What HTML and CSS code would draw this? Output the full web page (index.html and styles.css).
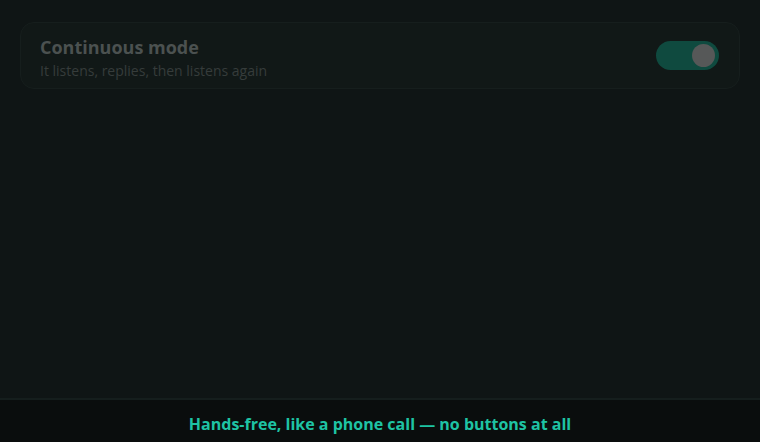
FILE: index.html
```html
<!DOCTYPE html>
<html lang="en">
<head>
<meta charset="utf-8">
<title>Continuous mode</title>
<link rel="stylesheet" href="styles.css">
</head>
<body>
<div class="app">
  <main class="content">
    <section class="card">
      <div class="card-text">
        <div class="title">Continuous mode</div>
        <div class="subtitle">It listens, replies, then listens again</div>
      </div>
      <div class="toggle" role="switch" aria-checked="true">
        <span class="knob"></span>
      </div>
    </section>
  </main>
  <footer class="footer">Hands-free, like a phone call — no buttons at all</footer>
</div>
</body>
</html>
```
FILE: styles.css
```css
* { box-sizing: border-box; }
html, body { margin: 0; height: 100%; }
body {
  background: #0f1515;
  font-family: "Open Sans", "Noto Sans", sans-serif;
}
.app {
  display: flex;
  flex-direction: column;
  height: 100vh;
}
.content {
  flex: 1;
  padding: 22px 20px;
}
.card {
  display: flex;
  align-items: center;
  justify-content: space-between;
  height: 67px;
  padding: 0 20px 0 19px;
  background: #111817;
  border: 1px solid #161e1d;
  border-radius: 14px;
}
.card-text {
  padding-top: 5px;
}
.title {
  color: #4b5150;
  font-size: 18px;
  font-weight: 700;
  line-height: 24px;
}
.subtitle {
  color: #363c3b;
  font-size: 14px;
  line-height: 20px;
  margin-top: 2px;
}
.toggle {
  width: 63px;
  height: 29px;
  border-radius: 15px;
  background: #0f4a3f;
  display: flex;
  align-items: center;
  justify-content: flex-end;
  padding: 0 4px;
}
.knob {
  width: 23px;
  height: 23px;
  border-radius: 50%;
  background: #565858;
}
.footer {
  height: 44px;
  border-top: 2px solid #151e1d;
  background: #0a0d0d;
  color: #1ec3a4;
  font-size: 16px;
  font-weight: 700;
  padding-top: 5px;
  display: flex;
  align-items: center;
  justify-content: center;
}
```
